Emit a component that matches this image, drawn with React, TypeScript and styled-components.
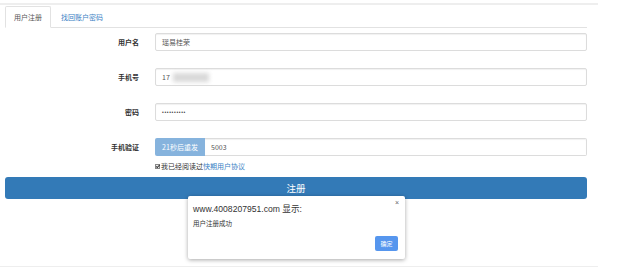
import React from "react";
import styled, { createGlobalStyle } from "styled-components";

const Global = createGlobalStyle`
  html, body { margin: 0; padding: 0; background: #fff; }
  body { font-family: "Liberation Sans", "Noto Sans CJK SC", sans-serif; color: #333; }
  * { box-sizing: border-box; }
`;

const Page = styled.div`
  position: relative;
  width: 598px;
  padding-top: 3px;
`;

const TopRule = styled.div`
  height: 2px;
  background: #eeeeee;
`;

const Content = styled.div`
  padding: 2px 11px 0 5px;
`;

const Tabs = styled.div`
  display: flex;
  align-items: flex-end;
  height: 21px;
  border-bottom: 1px solid #e2e2e2;
`;

const Tab = styled.div<{ $active?: boolean }>`
  height: ${(p) => (p.$active ? "22px" : "21px")};
  margin-bottom: ${(p) => (p.$active ? "-1px" : "0")};
  padding: 0 8px;
  display: flex;
  align-items: center;
  font-size: 7px;
  font-family: "Noto Sans CJK SC", sans-serif;
  color: ${(p) => (p.$active ? "#555" : "#3b7fc4")};
  background: #fff;
  border: 1px solid ${(p) => (p.$active ? "#e2e2e2" : "transparent")};
  border-bottom-color: ${(p) => (p.$active ? "#fff" : "transparent")};
  border-radius: 2px 2px 0 0;
  margin-right: 1px;
`;

const Form = styled.div`
  padding-top: 5px;
  display: grid;
  grid-template-columns: 134px 1fr;
  column-gap: 16px;
`;

const Label = styled.div`
  height: 18px;
  display: flex;
  align-items: center;
  justify-content: flex-end;
  font-family: "Noto Sans CJK SC", sans-serif;
  font-weight: 700;
  font-size: 7px;
  color: #333;
  margin-bottom: 17px;
`;

const Field = styled.div`
  height: 18px;
  margin-bottom: 17px;
  display: flex;
`;

const Input = styled.div`
  flex: 1;
  height: 18px;
  border: 1px solid #dcdcdc;
  border-radius: 2px;
  box-shadow: inset 0 1px 1px rgba(0, 0, 0, 0.06);
  display: flex;
  align-items: center;
  padding-left: 6px;
  font-size: 7px;
  font-family: "Noto Sans CJK SC", sans-serif;
  color: #555;
`;

const Blur = styled.span`
  display: inline-block;
  width: 36px;
  height: 9px;
  margin-left: 3px;
  background: #d9d9d9;
  filter: blur(2px);
`;

const Dots = styled.span`
  font-family: "Liberation Sans", sans-serif;
  font-size: 5px;
  letter-spacing: 0.65px;
  color: #444;
`;

const Addon = styled.div`
  width: 50px;
  height: 18px;
  background: #86b3dd;
  color: #fff;
  font-size: 7px;
  font-family: "Noto Sans CJK SC", sans-serif;
  display: flex;
  align-items: center;
  justify-content: center;
  border-radius: 2px 0 0 2px;
`;

const AddonInput = styled(Input)`
  border-left: none;
  border-radius: 0 2px 2px 0;
`;

const Agree = styled.div`
  grid-column: 2;
  margin-top: -12px;
  height: 10px;
  display: flex;
  align-items: center;
  font-size: 7px;
  font-family: "Noto Sans CJK SC", sans-serif;
  color: #333;
`;

const Check = styled.span`
  width: 5px;
  height: 5px;
  border: 1px solid #888;
  background: #eee;
  margin-right: 1px;
  position: relative;
  display: inline-block;
  &::after {
    content: "";
    position: absolute;
    left: 1px;
    top: -1px;
    width: 1px;
    height: 3px;
    border: solid #333;
    border-width: 0 1px 1px 0;
    transform: rotate(45deg);
  }
`;

const Link = styled.span`
  color: #3b7fc4;
`;

const Submit = styled.div`
  margin-top: 4px;
  height: 22px;
  background: #337ab7;
  border-radius: 3px;
  color: #fff;
  font-size: 9.5px;
  font-family: "Noto Sans CJK SC", sans-serif;
  display: flex;
  align-items: center;
  justify-content: center;
`;

const BottomRule = styled.div`
  margin-top: 67px;
  height: 1px;
  background: #eeeeee;
`;

const Dialog = styled.div`
  position: absolute;
  left: 188px;
  top: 196px;
  width: 217px;
  height: 63px;
  background: #fff;
  border-radius: 2px;
  box-shadow: 0 1px 4px rgba(0, 0, 0, 0.35);
  padding: 8px 7px 0 5px;
  display: flex;
  flex-direction: column;
`;

const DialogTitle = styled.div`
  font-size: 8.6px;
  color: #333;
  font-family: "Liberation Sans", "Noto Sans CJK SC", sans-serif;
  line-height: 10px;
`;

const Close = styled.div`
  position: absolute;
  right: 6px;
  top: 3px;
  font-size: 7px;
  color: #666;
  line-height: 8px;
`;

const DialogMsg = styled.div`
  margin-top: 5px;
  font-size: 6.5px;
  font-family: "Noto Sans CJK SC", sans-serif;
  color: #333;
  line-height: 8px;
`;

const DialogFoot = styled.div`
  display: flex;
  justify-content: flex-end;
  margin-top: 9px;
`;

const OkButton = styled.div`
  width: 23px;
  height: 15px;
  background: #5696ee;
  border-radius: 2px;
  color: #fff;
  font-size: 6px;
  font-family: "Noto Sans CJK SC", sans-serif;
  display: flex;
  align-items: center;
  justify-content: center;
`;

export default function App() {
  return (
    <Page>
      <Global />
      <TopRule />
      <Content>
        <Tabs>
          <Tab $active>用户注册</Tab>
          <Tab>找回账户密码</Tab>
        </Tabs>
        <Form>
          <Label>用户名</Label>
          <Field>
            <Input>瑶易桂荣</Input>
          </Field>
          <Label>手机号</Label>
          <Field>
            <Input>
              17<Blur />
            </Input>
          </Field>
          <Label>密码</Label>
          <Field>
            <Input>
              <Dots>••••••••••</Dots>
            </Input>
          </Field>
          <Label>手机验证</Label>
          <Field>
            <Addon>21秒后重发</Addon>
            <AddonInput>5003</AddonInput>
          </Field>
          <Agree>
            <Check />
            我已经阅读过<Link>快期用户协议</Link>
          </Agree>
        </Form>
        <Submit>注册</Submit>
      </Content>
      <BottomRule />
      <Dialog>
        <Close>×</Close>
        <DialogTitle>www.4008207951.com 显示:</DialogTitle>
        <DialogMsg>用户注册成功</DialogMsg>
        <DialogFoot>
          <OkButton>确定</OkButton>
        </DialogFoot>
      </Dialog>
    </Page>
  );
}
